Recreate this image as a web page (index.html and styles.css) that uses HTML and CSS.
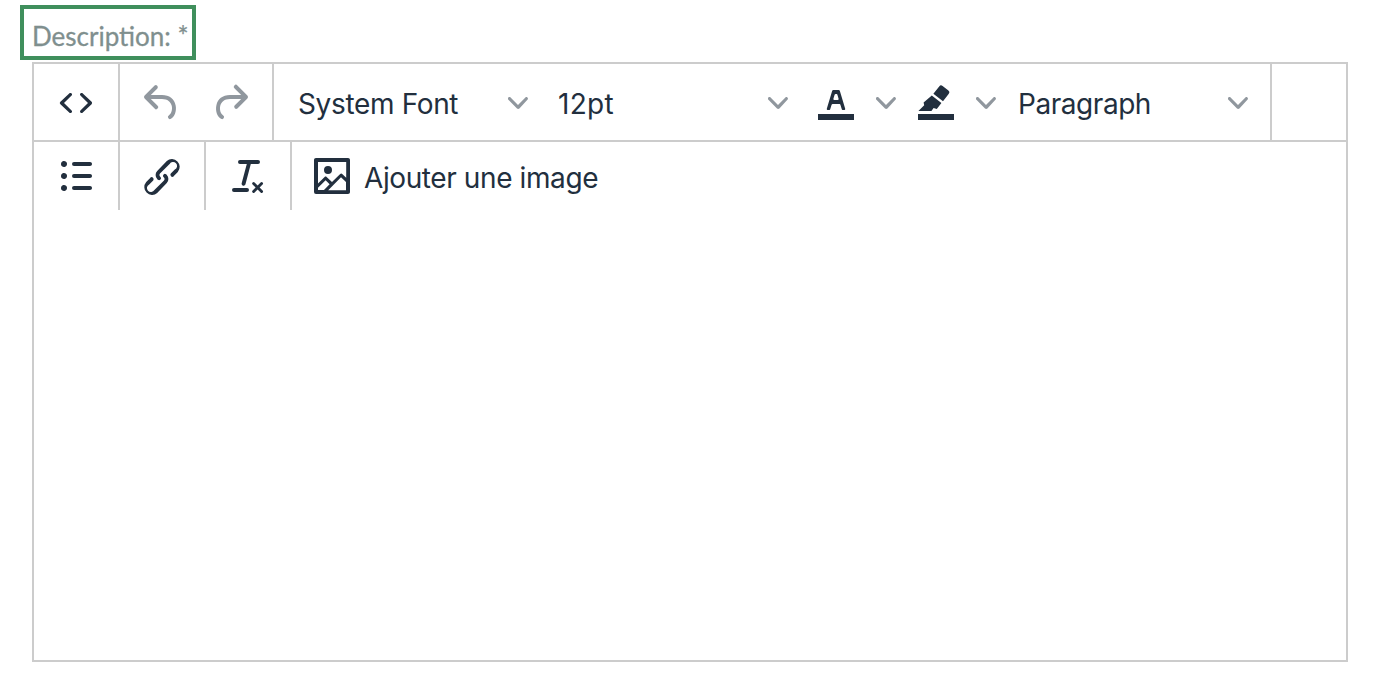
FILE: index.html
```html
<!DOCTYPE html>
<html lang="fr">
<head>
<meta charset="utf-8">
<title>Description</title>
<link rel="stylesheet" href="styles.css">
</head>
<body>
<label class="field-label">Description: *</label>
<div class="editor">
  <div class="toolbar toolbar-top">
    <div class="group group-first">
      <svg class="icon" viewBox="0 0 24 24"><path d="M9.8 15.7c.3.3.3.8 0 1-.3.4-.9.4-1.2 0l-4.4-4.1a.8.8 0 0 1 0-1.2l4.4-4.2c.3-.3.9-.3 1.2 0 .3.3.3.8 0 1.1L6 12l3.8 3.7zm4.4 0l3.8-3.7-3.8-3.7a.8.8 0 0 1 0-1.1c.3-.3.9-.3 1.2 0l4.4 4.2c.3.3.3.9 0 1.2l-4.4 4.1c-.3.4-.9.4-1.2 0a.8.8 0 0 1 0-1z"/></svg>
    </div>
    <div class="group group-history">
      <svg class="icon muted" viewBox="0 0 24 24"><path d="M6.4 8H12c3.7 0 6.2 2 6.8 5.1.6 2.7-.4 5.6-2.3 6.8a1 1 0 0 1-1-1.8c1.1-.6 1.8-2.7 1.4-4.6-.5-2.1-2.1-3.5-4.9-3.5H6.4l3.3 3.3a1 1 0 1 1-1.4 1.4l-5-5a1 1 0 0 1 0-1.4l5-5a1 1 0 0 1 1.4 1.4L6.4 8z"/></svg>
      <svg class="icon muted" viewBox="0 0 24 24"><path d="M17.6 10H12c-2.8 0-4.4 1.4-4.9 3.5-.4 2 .3 4 1.4 4.6a1 1 0 1 1-1 1.8c-2-1.2-2.9-4.1-2.3-6.8.6-3 3-5.1 6.8-5.1h5.6l-3.3-3.3a1 1 0 1 1 1.4-1.4l5 5a1 1 0 0 1 0 1.4l-5 5a1 1 0 0 1-1.4-1.4l3.3-3.3z"/></svg>
    </div>
    <div class="group group-format">
      <div class="select"><span>System Font</span><svg class="chevron" viewBox="0 0 10 10"><path d="M8.7 2.2c.3-.3.8-.3 1 0 .4.4.4.9 0 1.2L5.7 7.8c-.3.3-.9.3-1.2 0L.2 3.4a.8.8 0 0 1 0-1.2c.3-.3.8-.3 1.1 0L5 6l3.7-3.8z"/></svg></div>
      <div class="select"><span class="size-text">12pt</span><svg class="chevron" viewBox="0 0 10 10"><path d="M8.7 2.2c.3-.3.8-.3 1 0 .4.4.4.9 0 1.2L5.7 7.8c-.3.3-.9.3-1.2 0L.2 3.4a.8.8 0 0 1 0-1.2c.3-.3.8-.3 1.1 0L5 6l3.7-3.8z"/></svg></div>
      <div class="split">
        <svg class="icon" viewBox="0 0 24 24"><path d="M3 18h18v3H3z"/><path d="M8.7 16h-.8a.5.5 0 0 1-.5-.6l2.7-9c.1-.3.3-.4.5-.4h2.8c.2 0 .4.1.5.4l2.7 9a.5.5 0 0 1-.5.6h-.8a.5.5 0 0 1-.4-.4l-.7-2.2c0-.3-.3-.4-.5-.4h-3.4c-.2 0-.4.1-.5.4l-.7 2.2c0 .3-.2.4-.4.4zm2.6-7.6l-.6 2a.5.5 0 0 0 .5.6h1.6a.5.5 0 0 0 .5-.6l-.6-2c0-.3-.3-.4-.5-.4h-.4c-.2 0-.4.1-.5.4z"/></svg>
        <svg class="chevron" viewBox="0 0 10 10"><path d="M8.7 2.2c.3-.3.8-.3 1 0 .4.4.4.9 0 1.2L5.7 7.8c-.3.3-.9.3-1.2 0L.2 3.4a.8.8 0 0 1 0-1.2c.3-.3.8-.3 1.1 0L5 6l3.7-3.8z"/></svg>
      </div>
      <div class="split">
        <svg class="icon" viewBox="0 0 24 24"><path d="M3 18h18v3H3z"/><path d="M13.6 4.2a1.2 1.2 0 0 1 1.7-.2l2.9 2.2a1.2 1.2 0 0 1 .2 1.7l-2.9 3.7-4.8-3.7zM9.9 8.8l4.8 3.7-2.3 3-1.6-.5-1.1 1.5H3.2l2.9-2.9-.3-1.4z"/></svg>
        <svg class="chevron" viewBox="0 0 10 10"><path d="M8.7 2.2c.3-.3.8-.3 1 0 .4.4.4.9 0 1.2L5.7 7.8c-.3.3-.9.3-1.2 0L.2 3.4a.8.8 0 0 1 0-1.2c.3-.3.8-.3 1.1 0L5 6l3.7-3.8z"/></svg>
      </div>
      <div class="select"><span class="paragraph-text">Paragraph</span><svg class="chevron" viewBox="0 0 10 10"><path d="M8.7 2.2c.3-.3.8-.3 1 0 .4.4.4.9 0 1.2L5.7 7.8c-.3.3-.9.3-1.2 0L.2 3.4a.8.8 0 0 1 0-1.2c.3-.3.8-.3 1.1 0L5 6l3.7-3.8z"/></svg></div>
    </div>
  </div>
  <div class="toolbar toolbar-bottom">
    <div class="group group-first">
      <svg class="icon" viewBox="0 0 24 24"><path d="M11 5h8c.6 0 1 .4 1 1s-.4 1-1 1h-8a1 1 0 0 1 0-2zm0 6h8c.6 0 1 .4 1 1s-.4 1-1 1h-8a1 1 0 0 1 0-2zm0 6h8c.6 0 1 .4 1 1s-.4 1-1 1h-8a1 1 0 0 1 0-2zM4.5 6c0-.4.1-.8.4-1 .3-.4.7-.5 1.1-.5.4 0 .8.1 1 .4.4.3.5.7.5 1.1 0 .4-.1.8-.4 1-.3.4-.7.5-1.1.5-.4 0-.8-.1-1-.4-.4-.3-.5-.7-.5-1.1zm0 6c0-.4.1-.8.4-1 .3-.4.7-.5 1.1-.5.4 0 .8.1 1 .4.4.3.5.7.5 1.1 0 .4-.1.8-.4 1-.3.4-.7.5-1.1.5-.4 0-.8-.1-1-.4-.4-.3-.5-.7-.5-1.1zm0 6c0-.4.1-.8.4-1 .3-.4.7-.5 1.1-.5.4 0 .8.1 1 .4.4.3.5.7.5 1.1 0 .4-.1.8-.4 1-.3.4-.7.5-1.1.5-.4 0-.8-.1-1-.4-.4-.3-.5-.7-.5-1.1z"/></svg>
    </div>
    <div class="group group-single">
      <svg class="icon" viewBox="-1 -.5 24 24"><path d="M6.2 12.3a1 1 0 0 1 1.4 1.4l-2 2a2 2 0 1 0 2.6 2.8l4.8-4.8a1 1 0 0 0 0-1.4 1 1 0 1 1 1.4-1.3 2.9 2.9 0 0 1 0 4L9.6 20a3.9 3.9 0 0 1-5.5-5.5l2-2zm11.6-.6a1 1 0 0 1-1.4-1.4l2-2a2 2 0 1 0-2.6-2.8L11 10.3a1 1 0 0 0 0 1.4A1 1 0 1 1 9.6 13a2.9 2.9 0 0 1 0-4L14.4 4a3.9 3.9 0 0 1 5.5 5.5l-2 2z"/></svg>
    </div>
    <div class="group group-single">
      <svg class="icon" viewBox="0 0 24 24"><path d="M9 4h9a1 1 0 0 1 0 2h-3.6l-2.7 10.3a1 1 0 0 1-1.9-.5L12.4 6H9a1 1 0 0 1 0-2zM6 18h6.5a1 1 0 0 1 0 2H6a1 1 0 0 1 0-2zm9.3-1.7a.7.7 0 0 1 1-1l1.5 1.5 1.5-1.5a.7.7 0 0 1 1 1l-1.5 1.5 1.5 1.5a.7.7 0 0 1-1 1l-1.5-1.5-1.5 1.5a.7.7 0 0 1-1-1l1.5-1.5z"/></svg>
    </div>
    <div class="group group-image">
      <svg class="icon" viewBox="0 0 24 24"><path d="M5 15.7l3.3-3.2c.3-.3.7-.3 1 0L12 15l4.1-4c.3-.4.8-.4 1 0l2 1.9V5H5v10.7zM5 18V19h3l2.8-2.9-2-2L5 17.9zm14-3l-2.5-2.4-6.4 6.5H19v-4zM4 3h16c.6 0 1 .4 1 1v16c0 .6-.4 1-1 1H4a1 1 0 0 1-1-1V4c0-.6.4-1 1-1zm6 8a2 2 0 1 0 0-4 2 2 0 0 0 0 4z"/></svg>
      <span class="image-text">Ajouter une image</span>
    </div>
  </div>
</div>
</body>
</html>
```

FILE: styles.css
```css
html, body {
  margin: 0;
  padding: 0;
  background: #fff;
}

body {
  padding: 5px 0 0 20px;
  font-family: Inter, "Liberation Sans", sans-serif;
  color: #222f3e;
}

.field-label {
  display: block;
  box-sizing: border-box;
  width: 176px;
  height: 55px;
  border: 4px solid #3f8f5c;
  padding: 0 0 0 8px;
  font-family: Lato, "Liberation Sans", sans-serif;
  font-size: 26px;
  line-height: 55px;
  color: #7f8f8e;
  white-space: nowrap;
  -webkit-text-stroke: 0.3px #7f8f8e;
}

.editor {
  box-sizing: border-box;
  width: 1316px;
  height: 600px;
  margin: 2px 0 0 12px;
  border: 2px solid #ccc;
}

.toolbar {
  display: flex;
}

.toolbar-top {
  height: 78px;
  box-sizing: border-box;
  border-bottom: 2px solid #ccc;
}

.toolbar-bottom {
  height: 68px;
}

.group {
  display: flex;
  align-items: center;
  box-sizing: border-box;
  border-right: 2px solid #ccc;
}

.toolbar-top .group {
  padding-top: 2px;
}

.group-first {
  width: 86px;
  padding-left: 18px;
}

.group-history {
  width: 154px;
  padding-left: 18px;
  gap: 20px;
}

.group-format {
  width: 998px;
  padding-left: 12px;
}

.group-single {
  width: 86px;
  padding-left: 16px;
}

.group-image {
  border-right: 0;
  padding-left: 16px;
  gap: 8px;
}

.icon {
  flex: none;
  width: 48px;
  height: 48px;
  fill: #222f3e;
}

.muted {
  fill: #90979e;
}

.chevron {
  flex: none;
  width: 20px;
  height: 20px;
  fill: #90979e;
}

.select {
  display: flex;
  align-items: center;
  justify-content: space-between;
  box-sizing: border-box;
  width: 260px;
  height: 48px;
  padding: 0 18px 0 12px;
  font-size: 28px;
  line-height: 48px;
  letter-spacing: -0.35px;
}

.select span {
  padding-top: 2px;
}

.select .size-text {
  letter-spacing: 0.3px;
}

.select .paragraph-text {
  letter-spacing: -0.45px;
}

.split {
  display: flex;
  align-items: center;
  box-sizing: border-box;
  width: 100px;
  padding-left: 6px;
}

.split .icon {
  margin-top: -2px;
}

.split .chevron {
  margin-left: 16px;
}

.image-text {
  padding-top: 4px;
  font-size: 28px;
  line-height: 48px;
  letter-spacing: -0.4px;
  white-space: nowrap;
}
```
